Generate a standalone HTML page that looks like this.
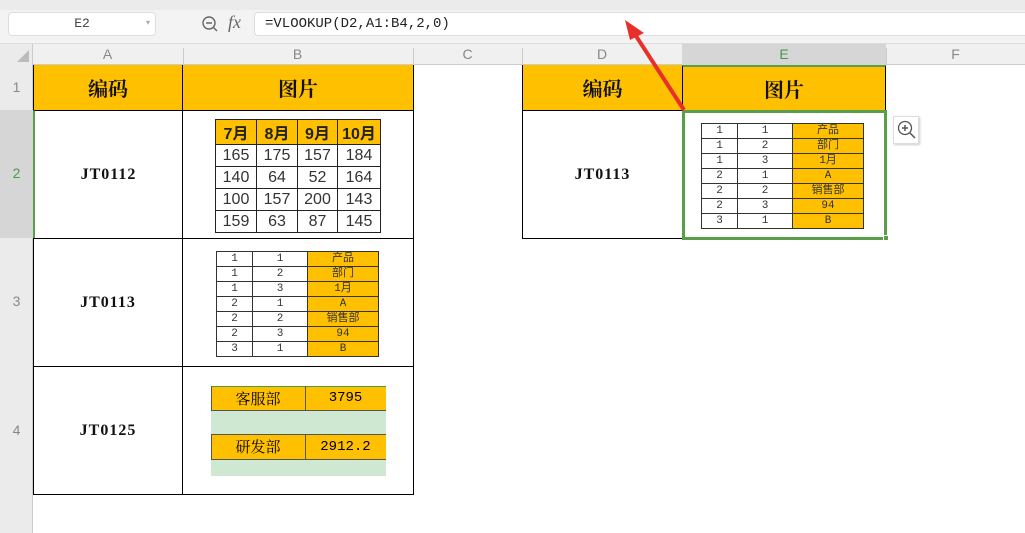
<!DOCTYPE html><html><head><meta charset="utf-8"><style>
*{margin:0;padding:0;box-sizing:border-box}
body{width:1025px;height:533px;overflow:hidden;background:#fff;position:relative;font-family:"Liberation Sans","Noto Sans CJK SC",sans-serif}
.a{position:absolute}
.hd{background:#FFC000;font-weight:bold;font-size:20px;display:flex;align-items:center;justify-content:center;font-family:"Noto Serif CJK SC","Noto Sans CJK SC",serif;color:#111}
.code{font-family:"Liberation Serif",serif;font-weight:bold;font-size:16px;letter-spacing:1px;display:flex;align-items:center;justify-content:center;color:#111}
.ch{color:#888;font-size:14px;text-align:center;line-height:21px}
table{border-collapse:collapse;position:absolute}
.t1 td{border:1px solid #222;text-align:center;font-size:16px;color:#333;height:22px;padding:0}
.t1 tr:first-child td{background:#FFC000;font-weight:bold;color:#222}
.t2 td{border:1px solid #333;text-align:center;font-size:11px;color:#333;height:15px;padding:0;line-height:13px;font-family:"Liberation Mono","Noto Sans CJK SC",monospace}
.t2 td:nth-child(3){background:#FFC000}
</style></head><body>
<div class="a" style="left:0;top:0;width:1025px;height:44px;background:#f3f3f3;border-bottom:1px solid #ddd"></div>
<div class="a" style="left:0;top:0;width:1025px;height:10px;background:#ebebeb"></div>
<div class="a" style="left:8px;top:12px;width:148px;height:24px;background:#fff;border:1px solid #ddd;border-radius:4px;font-family:'Liberation Mono',monospace;font-size:13px;color:#444;text-align:center;line-height:22px">E2<span style="position:absolute;right:5px;color:#aaa;font-size:8px">▾</span></div>
<svg class="a" style="left:200px;top:14px" width="20" height="20"><circle cx="9" cy="9" r="6" fill="none" stroke="#666" stroke-width="1.4"/><path d="M6 9h6M13 13l4 4" stroke="#666" stroke-width="1.4"/></svg>
<div class="a" style="left:228px;top:12px;font-family:'Liberation Serif',serif;font-style:italic;font-size:18px;color:#666">fx</div>
<div class="a" style="left:254px;top:12px;width:780px;height:24px;background:#fff;border:1px solid #ddd;border-radius:4px;font-family:'Liberation Mono','Noto Sans CJK SC',monospace;font-size:14px;color:#222;line-height:22px;padding-left:10px">=VLOOKUP(D2,A1:B4,2,0)</div>
<div class="a" style="left:0;top:44px;width:1025px;height:21px;background:#f0f0f0;border-bottom:1px solid #ccc"></div>
<div class="a" style="left:0;top:44px;width:33px;height:489px;background:#ebebeb;border-right:1px solid #ccc"></div>
<div class="a" style="left:0;top:110px;width:33px;height:128px;background:#d6d6d6"></div>
<div class="a" style="left:682px;top:44px;width:204px;height:21px;background:#d6d6d6"></div>
<svg class="a" style="left:17px;top:50px" width="12" height="12"><path d="M12 0V12H0Z" fill="#bbb"/></svg>
<div class="a ch" style="left:33px;top:44px;width:149px">A</div>
<div class="a ch" style="left:182px;top:44px;width:231px">B</div>
<div class="a ch" style="left:413px;top:44px;width:109px">C</div>
<div class="a ch" style="left:522px;top:44px;width:160px">D</div>
<div class="a ch" style="left:682px;top:44px;width:204px;color:#4a9a4a">E</div>
<div class="a ch" style="left:886px;top:44px;width:139px">F</div>
<div class="a" style="left:183px;top:48px;width:1px;height:16px;background:#ccc"></div>
<div class="a" style="left:413px;top:48px;width:1px;height:16px;background:#ccc"></div>
<div class="a" style="left:522px;top:48px;width:1px;height:16px;background:#ccc"></div>
<div class="a" style="left:886px;top:48px;width:1px;height:16px;background:#ccc"></div>
<div class="a ch" style="left:0;top:77px;width:33px">1</div>
<div class="a ch" style="left:0;top:163px;width:33px;color:#4a9a4a">2</div>
<div class="a ch" style="left:0;top:291px;width:33px">3</div>
<div class="a ch" style="left:0;top:420px;width:33px">4</div>
<div class="a hd" style="left:33px;top:65px;width:150px;height:46px;border:1px solid #000;border-top:none">编码</div>
<div class="a hd" style="left:182px;top:65px;width:232px;height:46px;border:1px solid #000;border-top:none">图片</div>
<div class="a code" style="left:33px;top:110px;width:150px;height:129px;border:1px solid #000;border-left:2px solid #5a9e4a">JT0112</div>
<div class="a" style="left:182px;top:110px;width:232px;height:129px;border:1px solid #000"></div>
<div class="a code" style="left:33px;top:238px;width:150px;height:129px;border:1px solid #000">JT0113</div>
<div class="a" style="left:182px;top:238px;width:232px;height:129px;border:1px solid #000"></div>
<div class="a code" style="left:33px;top:366px;width:150px;height:129px;border:1px solid #000">JT0125</div>
<div class="a" style="left:182px;top:366px;width:232px;height:129px;border:1px solid #000"></div>
<table class="t1" style="left:215px;top:119px;width:166px">
<tr><td style="width:41px">7月</td><td style="width:41px">8月</td><td style="width:40px">9月</td><td>10月</td></tr>
<tr><td>165</td><td>175</td><td>157</td><td>184</td></tr>
<tr><td>140</td><td>64</td><td>52</td><td>164</td></tr>
<tr><td>100</td><td>157</td><td>200</td><td>143</td></tr>
<tr><td>159</td><td>63</td><td>87</td><td>145</td></tr></table>
<table class="t2" style="left:216px;top:251px;width:163px">
<tr><td style="width:36px">1</td><td style="width:55px">1</td><td>产品</td></tr>
<tr><td>1</td><td>2</td><td>部门</td></tr><tr><td>1</td><td>3</td><td>1月</td></tr>
<tr><td>2</td><td>1</td><td>A</td></tr><tr><td>2</td><td>2</td><td>销售部</td></tr>
<tr><td>2</td><td>3</td><td>94</td></tr><tr><td>3</td><td>1</td><td>B</td></tr></table>
<div class="a" style="left:211px;top:386px;width:175px;height:90px;background:#cfe8d2"></div>
<div class="a" style="left:211px;top:386px;width:175px;height:25px;background:#FFC000;border-top:1px solid #4a9a4a;border-bottom:1px solid #555;border-left:1px solid #555"></div>
<div class="a" style="left:211px;top:434px;width:175px;height:26px;background:#FFC000;border:1px solid #555;border-right:none"></div>
<div class="a" style="left:305px;top:386px;width:1px;height:25px;background:#555"></div>
<div class="a" style="left:305px;top:434px;width:1px;height:26px;background:#555"></div>
<div class="a" style="left:211px;top:386px;width:94px;height:25px;text-align:center;line-height:25px;font-size:15px;font-family:'Noto Serif CJK SC',serif">客服部</div>
<div class="a" style="left:305px;top:386px;width:81px;height:25px;text-align:center;line-height:25px;font-size:14px;font-family:'Liberation Mono',monospace">3795</div>
<div class="a" style="left:211px;top:434px;width:94px;height:26px;text-align:center;line-height:26px;font-size:15px;font-family:'Noto Serif CJK SC',serif">研发部</div>
<div class="a" style="left:305px;top:434px;width:81px;height:26px;text-align:center;line-height:26px;font-size:14px;font-family:'Liberation Mono',monospace">2912.2</div>
<div class="a hd" style="left:522px;top:65px;width:161px;height:46px;border:1px solid #000;border-top:none">编码</div>
<div class="a hd" style="left:682px;top:65px;width:204px;height:46px;border:1px solid #000;border-top:2px solid #5a9e4a">图片</div>
<div class="a code" style="left:522px;top:110px;width:161px;height:129px;border:1px solid #000">JT0113</div>
<div class="a" style="left:682px;top:110px;width:205px;height:130px;border:3px solid #5a9e4a"></div>
<div class="a" style="left:883px;top:235px;width:6px;height:6px;background:#5a9e4a;border:1px solid #fff"></div>
<table class="t2" style="left:701px;top:123px;width:163px">
<tr><td style="width:36px">1</td><td style="width:55px">1</td><td>产品</td></tr>
<tr><td>1</td><td>2</td><td>部门</td></tr><tr><td>1</td><td>3</td><td>1月</td></tr>
<tr><td>2</td><td>1</td><td>A</td></tr><tr><td>2</td><td>2</td><td>销售部</td></tr>
<tr><td>2</td><td>3</td><td>94</td></tr><tr><td>3</td><td>1</td><td>B</td></tr></table>
<div class="a" style="left:893px;top:116px;width:26px;height:28px;background:#fff;border:1px solid #ddd;box-shadow:1px 1px 2px #ccc"></div>
<svg class="a" style="left:896px;top:119px" width="22" height="22"><circle cx="9" cy="9" r="6.5" fill="none" stroke="#555" stroke-width="1.3"/><path d="M6 9h6M9 6v6M14 14l5 5" stroke="#555" stroke-width="1.5"/></svg>
<svg class="a" style="left:0;top:0" width="1025" height="533"><path d="M684 110L636 36" stroke="#e8302a" stroke-width="4"/><path d="M625 20L644 33L630 40Z" fill="#e8302a"/></svg>
</body></html>
